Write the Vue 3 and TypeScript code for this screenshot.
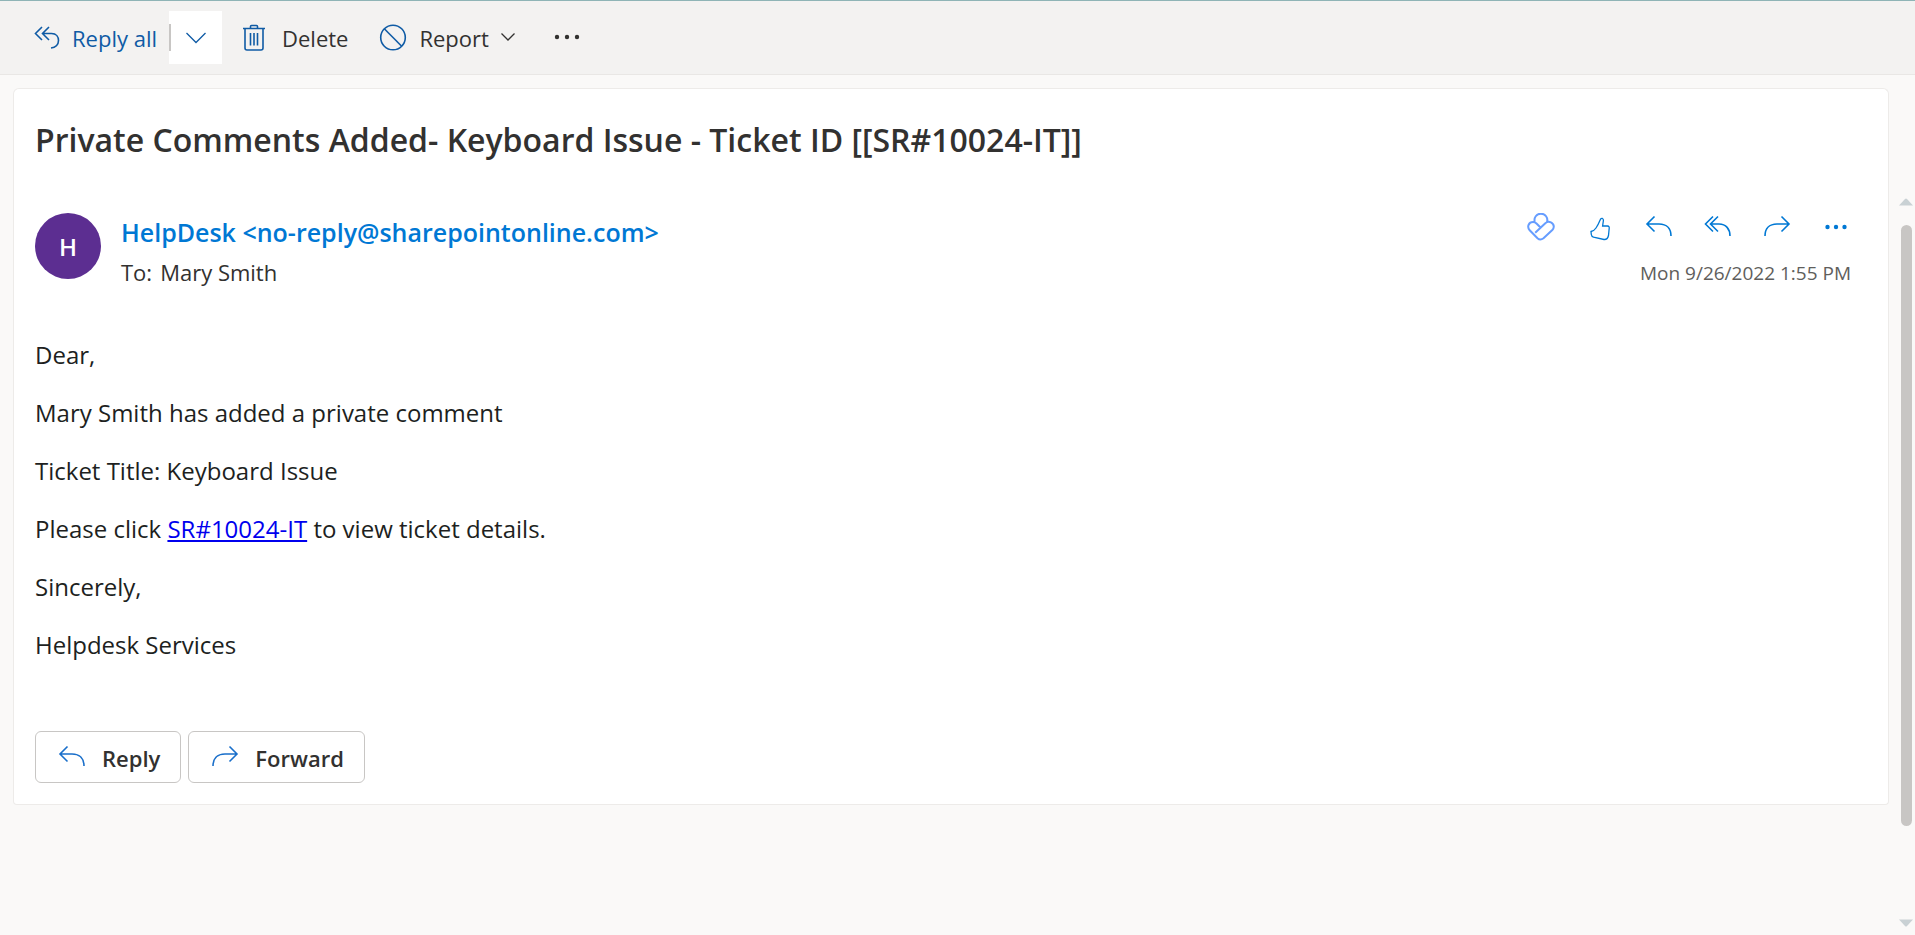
<script setup lang="ts">
import { ref } from 'vue'

const subject = ref('Private Comments Added- Keyboard Issue - Ticket ID [[SR#10024-IT]]')
const sender = ref('HelpDesk <no-reply@sharepointonline.com>')
const recipient = ref('Mary Smith')
const sentAt = ref('Mon 9/26/2022 1:55 PM')

const scroll = ref({ position: 0, visible: 89 })
</script>

<template>
  <div class="page">
    <header class="toolbar" role="toolbar" aria-label="Message actions">
      <button type="button" class="tool primary">
        <svg class="icon" width="26" height="24" viewBox="0 0 26 24" aria-hidden="true">
          <path d="M8 1 1.500 7.500 8 14M15 1 8.500 7.500 15 14M8.500 7.500H17.500C22.500 7.500 24.500 11 24.500 14.500C24.500 18.500 21.500 21.500 17 22" />
        </svg>
        <span>Reply all</span>
      </button>
      <button type="button" class="split" aria-label="More reply options">
        <svg class="icon" width="20" height="12" viewBox="0 0 20 12" aria-hidden="true">
          <path d="M.5 1 10 10.500 19.500 1" />
        </svg>
      </button>
      <button type="button" class="tool delete">
        <svg class="icon" width="22" height="28" viewBox="0 0 22 28" aria-hidden="true">
          <path d="M0 4.500H22M7.500 4V2.500Q7.500 1.500 8.500 1.500H13.500Q14.500 1.500 14.500 2.500V4M2 5V24Q2 26 4 26H18Q20 26 20 24V5M7.500 9V21.500M11 9V21.500M14.500 9V21.500" />
        </svg>
        <span>Delete</span>
      </button>
      <button type="button" class="tool report">
        <svg class="icon" width="28" height="28" viewBox="0 0 28 28" aria-hidden="true">
          <circle cx="14" cy="13.500" r="12.300" />
          <path d="M5.300 4.800 22.700 22.200" />
        </svg>
        <span>Report</span>
        <svg class="caret" width="14" height="10" viewBox="0 0 14 10" aria-hidden="true">
          <path d="M.5 .5 7 7 13.500 .5" />
        </svg>
      </button>
      <button type="button" class="tool overflow" aria-label="More actions">
        <svg width="26" height="8" viewBox="0 0 26 8" aria-hidden="true">
          <circle cx="3" cy="3" r="2.200" /><circle cx="13" cy="3" r="2.200" /><circle cx="23" cy="3" r="2.200" />
        </svg>
      </button>
    </header>

    <main class="reading">
      <section class="subject">
        <h1>{{ subject }}</h1>
      </section>

      <div class="scroller">
        <article class="message">
          <div class="meta">
            <div class="avatar" aria-hidden="true">H</div>
            <div class="people">
              <div class="sender">{{ sender }}</div>
              <div class="to"><span>To:</span><span>{{ recipient }}</span></div>
            </div>
            <div class="side">
              <div class="actions">
                <button type="button" aria-label="Share to Loop" class="loop">
                  <svg width="28" height="28" viewBox="0 0 28 28" aria-hidden="true">
                    <path d="M7.800 9A6.400 6.400 0 1 1 20 9M8.200 19.800 18.300 10.200C22 7 26.800 10 26.800 13.700Q26.700 15.500 25.300 17L16.500 25.300Q13.300 27.800 10.500 25.300L2.700 17.300C-.5 13.500 2 9 6 9Q8 9 9.500 10.500L13.500 14.500" />
                  </svg>
                </button>
                <button type="button" aria-label="Like">
                  <svg width="24" height="28" viewBox="0 0 24 28" aria-hidden="true" class="thin">
                    <path d="M12.500 6.200Q13.300 5.200 14.500 5.500Q15.500 5.800 15.400 7.500L14.600 13H19.500Q21.500 13.200 21.200 15.300L20.500 22.500Q19.500 26.800 16 26.500L5.500 24.200Q3.500 23.500 3.300 21.500L3 18.500Q6 18 8 15Q10 12 12.500 6.200Z" />
                  </svg>
                </button>
                <button type="button" aria-label="Reply">
                  <svg width="28" height="24" viewBox="0 0 28 24" aria-hidden="true">
                    <path d="M9.500 1.500 2 9 9.500 16.500M2 9H14C22 9 26 14 26 21" />
                  </svg>
                </button>
                <button type="button" aria-label="Reply all">
                  <svg width="28" height="24" viewBox="0 0 28 24" aria-hidden="true">
                    <path d="M9 1.500 1.500 9 9 16.500M14 1.500 6.500 9 14 16.500M6.500 9H15C22 9 26 14 26 21" />
                  </svg>
                </button>
                <button type="button" aria-label="Forward">
                  <svg width="28" height="24" viewBox="0 0 28 24" aria-hidden="true">
                    <path d="M18.500 1.500 26 9 18.500 16.500M26 9H14C6 9 2 14 2 21" />
                  </svg>
                </button>
                <button type="button" aria-label="More" class="dots">
                  <svg width="24" height="6" viewBox="0 0 24 6" aria-hidden="true">
                    <circle cx="3.500" cy="3" r="2.200" /><circle cx="12" cy="3" r="2.200" /><circle cx="20.500" cy="3" r="2.200" />
                  </svg>
                </button>
              </div>
              <time datetime="2022-09-26T13:55">{{ sentAt }}</time>
            </div>
          </div>

          <div class="body">
            <p>Dear,</p>
            <p>Mary Smith has added a private comment</p>
            <p>Ticket Title: Keyboard Issue</p>
            <p>Please click <a href="#ticket">SR#10024-IT</a> to view ticket details.</p>
            <p>Sincerely,</p>
            <p>Helpdesk Services</p>
          </div>

          <div class="responses">
            <button type="button">
              <svg width="28" height="24" viewBox="0 0 28 24" aria-hidden="true">
                <path d="M9.500 1.500 2 9 9.500 16.500M2 9H14C22 9 26 14 26 21" />
              </svg>
              <span>Reply</span>
            </button>
            <button type="button">
              <svg width="28" height="24" viewBox="0 0 28 24" aria-hidden="true">
                <path d="M18.500 1.500 26 9 18.500 16.500M26 9H14C6 9 2 14 2 21" />
              </svg>
              <span>Forward</span>
            </button>
          </div>
        </article>

        <div class="scrollbar" aria-hidden="true">
          <svg width="14" height="8" viewBox="0 0 14 8"><path d="M0 7.500 6 1Q7 0 8 1L14 7.500Z" /></svg>
          <div class="track">
            <div class="thumb" :style="{ marginTop: scroll.position + '%', height: scroll.visible + '%' }"></div>
          </div>
          <svg width="14" height="8" viewBox="0 0 14 8"><path d="M0 .5 6 7Q7 8 8 7L14 .5Z" /></svg>
        </div>
      </div>
    </main>
  </div>
</template>

<style>
body {
  margin: 0;
  background: #faf9f8;
}
</style>

<style scoped>
.page {
  display: flex;
  flex-direction: column;
  min-height: 100vh;
  box-sizing: border-box;
  border-top: 1px solid #8fb4b6;
  background: #faf9f8;
  color: #323130;
  font-family: "Open Sans", "Noto Sans", sans-serif;
}

button {
  display: flex;
  align-items: center;
  margin: 0;
  padding: 0;
  border: 0;
  background: none;
  color: inherit;
  font: inherit;
  cursor: pointer;
}

svg {
  flex: none;
  fill: none;
  stroke: currentColor;
  stroke-width: 1.6;
}

.toolbar {
  display: flex;
  align-items: center;
  height: 73px;
  padding-left: 34px;
  border-bottom: 1px solid #e9e7e5;
  background: #f3f2f1;
  font-size: 22px;
  line-height: 28px;
}

.tool span {
  padding-top: 1px;
}

.icon {
  color: #0f5ba5;
}

.primary {
  gap: 12px;
  color: #0f5ba5;
}

.split {
  justify-content: center;
  width: 53px;
  height: 53px;
  margin-left: 12px;
  background: linear-gradient(#c8c6c4, #c8c6c4) left center / 2px 27px no-repeat #fff;
}

.split svg,
.caret,
.thin {
  stroke-width: 1.3;
}

.delete {
  gap: 17px;
  margin-left: 21px;
}

.report {
  gap: 12px;
  margin-left: 31px;
}

.overflow {
  height: 53px;
  margin-left: 39px;
}

.overflow svg,
.dots svg {
  fill: currentColor;
  stroke: none;
}

.reading {
  display: flex;
  flex: 1;
  flex-direction: column;
  padding: 13px 2px 0 13px;
}

.subject,
.message {
  box-sizing: border-box;
  border: 1px solid #edebe9;
  background: #fff;
}

.subject {
  margin-right: 24px;
  padding: 28px 21px 25px;
  border-bottom: 0;
  border-radius: 6px 6px 0 0;
}

h1 {
  margin: 0;
  font-size: 32px;
  font-weight: 600;
  line-height: 46px;
}

.scroller {
  display: flex;
  flex: 1;
  gap: 10px;
}

.message {
  flex: 1;
  align-self: flex-start;
  padding: 25px 37px 21px 21px;
  border-top: 0;
  border-radius: 0 0 4px 4px;
}

.meta {
  display: flex;
  gap: 20px;
}

.avatar {
  display: flex;
  align-items: center;
  justify-content: center;
  flex: none;
  width: 66px;
  height: 66px;
  border-radius: 50%;
  background: #5c2e91;
  color: #fff;
  font-size: 24px;
  font-weight: 600;
}

.people {
  flex: 1;
}

.sender {
  color: #0078d4;
  font-size: 25px;
  font-weight: 600;
  line-height: 38px;
}

.to {
  display: flex;
  gap: 8px;
  font-size: 22px;
  line-height: 42px;
}

.side {
  display: flex;
  flex-direction: column;
  align-items: flex-end;
}

.actions {
  display: flex;
  gap: 29px;
  height: 28px;
  color: #0078d4;
}

.actions button {
  justify-content: center;
  width: 30px;
}

.actions .loop {
  color: #669dff;
}

.loop svg {
  stroke-width: 2;
}

time {
  color: #605e5c;
  font-size: 19px;
  line-height: 28px;
  padding-top: 18px;
}

.body {
  padding-top: 45px;
  color: #201f1e;
  font-size: 24px;
}

.body p {
  margin: 0 0 24px;
  line-height: 34px;
}

.body a {
  color: #0000ee;
}

.responses {
  display: flex;
  gap: 7px;
  padding-top: 45px;
}

.responses button {
  gap: 16px;
  height: 52px;
  padding: 0 20px 0 22px;
  border: 1px solid #c8c6c4;
  border-radius: 6px;
  font-size: 22px;
  font-weight: 600;
}

.responses svg {
  color: #1a6fca;
}

.responses span {
  padding-top: 2px;
}

.scrollbar {
  display: flex;
  flex-direction: column;
  align-items: center;
  gap: 19px;
  width: 14px;
  padding: 10px 0 8px;
}

.scrollbar svg {
  fill: #c9d1d4;
  stroke: none;
}

.track {
  flex: 1;
  width: 11px;
}

.thumb {
  border-radius: 6px;
  background: #c8c6c4;
}
</style>
